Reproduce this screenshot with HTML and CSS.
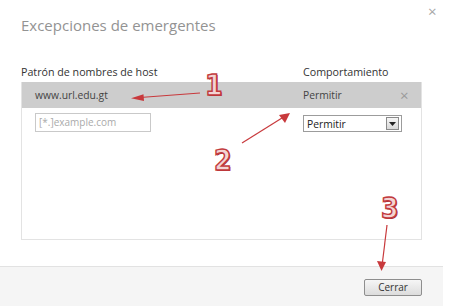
FILE: index.html
```html
<!DOCTYPE html>
<html lang="es">
<head>
<meta charset="utf-8">
<title>Excepciones de emergentes</title>
<link rel="stylesheet" href="styles.css">
</head>
<body>
<div class="dialog">
  <span class="close">×</span>
  <h1 class="title">Excepciones de emergentes</h1>
  <div class="content">
    <div class="headers">
      <span class="col-host">Patrón de nombres de host</span>
      <span class="col-beh">Comportamiento</span>
    </div>
    <div class="list">
      <div class="row selected">
        <span class="col-host host">www.url.edu.gt</span>
        <span class="col-beh beh">Permitir</span>
        <span class="del">×</span>
      </div>
      <div class="row edit">
        <div class="col-host"><span class="input">[*.]example.com</span></div>
        <div class="col-beh"><span class="select"><span class="select-text">Permitir</span><span class="select-btn"><svg width="7" height="4" viewBox="0 0 7 4"><path d="M0 0H7L3.5 4Z" fill="#222"/></svg></span></span></div>
      </div>
    </div>
  </div>
  <div class="footer">
    <span class="button">Cerrar</span>
  </div>
</div>

<svg class="arrows" width="459" height="306" viewBox="0 0 459 306">
  <g stroke="#c8393c" stroke-width="1.2" fill="none">
    <line x1="200" y1="93" x2="140" y2="97.5"/>
    <line x1="242" y1="143" x2="282" y2="118"/>
    <line x1="387" y1="225" x2="382.5" y2="262"/>
  </g>
  <g fill="#c8393c">
    <path d="M131 98.2 L143.5 94.3 L144 101 Z"/>
    <path d="M290 113 L285 123 L279 115 Z"/>
    <path d="M381.5 271 L377 261 L386 262 Z"/>
  </g>
</svg>
<span class="num num1">1</span>
<span class="num num2">2</span>
<span class="num num3">3</span>
</body>
</html>
```

FILE: styles.css
```css
html, body {
  margin: 0;
  padding: 0;
  background: #fff;
}
body {
  width: 459px;
  height: 306px;
  overflow: hidden;
  position: relative;
  font-family: "Open Sans", "Noto Sans", sans-serif;
  color: #333;
}
.dialog {
  width: 443px;
  height: 306px;
  display: flex;
  flex-direction: column;
  position: relative;
  background: #fff;
}
.close {
  position: absolute;
  left: 428px;
  top: 1px;
  font-size: 15px;
  color: #a6a6a6;
  line-height: 20px;
}
.title {
  margin: 0;
  padding: 14px 0 0 21px;
  height: 46px;
  box-sizing: border-box;
  font-size: 15px;
  font-weight: normal;
  color: #939393;
  line-height: 22px;
}
.content {
  padding: 0 21px;
  flex: 1;
}
.headers {
  display: flex;
  height: 36px;
  padding-top: 19px;
  box-sizing: border-box;
  font-size: 10.7px;
  line-height: 14px;
  color: #333;
}
.headers .col-host {
  width: 282px;
}
.list {
  border: 1px solid #e3e3e3;
  border-top: none;
  height: 158px;
  box-sizing: border-box;
}
.row {
  display: flex;
  align-items: center;
}
.row .col-host {
  width: 281px;
  padding-left: 13px;
  box-sizing: border-box;
}
.row .col-beh {
  width: 97px;
}
.selected {
  height: 26px;
  background: #cdcdcd;
  font-size: 10.3px;
  color: #444;
}
.del {
  font-size: 15px;
  line-height: 15px;
  color: #9a9a9a;
}
.edit {
  align-items: flex-start;
  padding-top: 5px;
}
.input {
  display: block;
  width: 116px;
  height: 19px;
  box-sizing: border-box;
  border: 1px solid #c9c9c9;
  font-size: 10px;
  line-height: 17px;
  padding-left: 3px;
  color: #aaa;
}
.select {
  margin-top: 2px;
  display: flex;
  align-items: center;
  width: 99px;
  height: 17px;
  box-sizing: border-box;
  border: 1px solid #9c9c9c;
  font-size: 10.3px;
  color: #222;
  padding-left: 3px;
}
.select-text {
  flex: 1;
}
.select-btn {
  width: 11px;
  height: 11px;
  margin-right: 2px;
  border: 1px solid #8a8a8a;
  background: linear-gradient(#f6f6f6, #d8d8d8);
  display: flex;
  align-items: center;
  justify-content: center;
}
.footer {
  height: 40px;
  box-sizing: border-box;
  background: #f5f5f5;
  border-top: 1px solid #e2e2e2;
  display: flex;
  justify-content: flex-end;
  align-items: flex-start;
  padding: 12px 21px 0 0;
}
.button {
  width: 58px;
  height: 17px;
  box-sizing: border-box;
  border: 1px solid #8e8e8e;
  border-radius: 2px;
  background: linear-gradient(#f6f6f6, #dcdcdc);
  font-size: 10px;
  line-height: 15px;
  text-align: center;
  color: #333;
}
.arrows {
  position: absolute;
  left: 0;
  top: 0;
}
.num {
  position: absolute;
  font-family: "DejaVu Sans Condensed", "DejaVu Sans", sans-serif;
  font-weight: bold;
  font-size: 28px;
  line-height: 28px;
  color: #f3d3d3;
  -webkit-text-stroke: 1.4px #c23a3d;
  text-shadow: 1px 1px 0 #a52f32;
}
.num1 { left: 205px; top: 72px; }
.num2 { left: 214px; top: 147px; }
.num3 { left: 381px; top: 195px; }
```
